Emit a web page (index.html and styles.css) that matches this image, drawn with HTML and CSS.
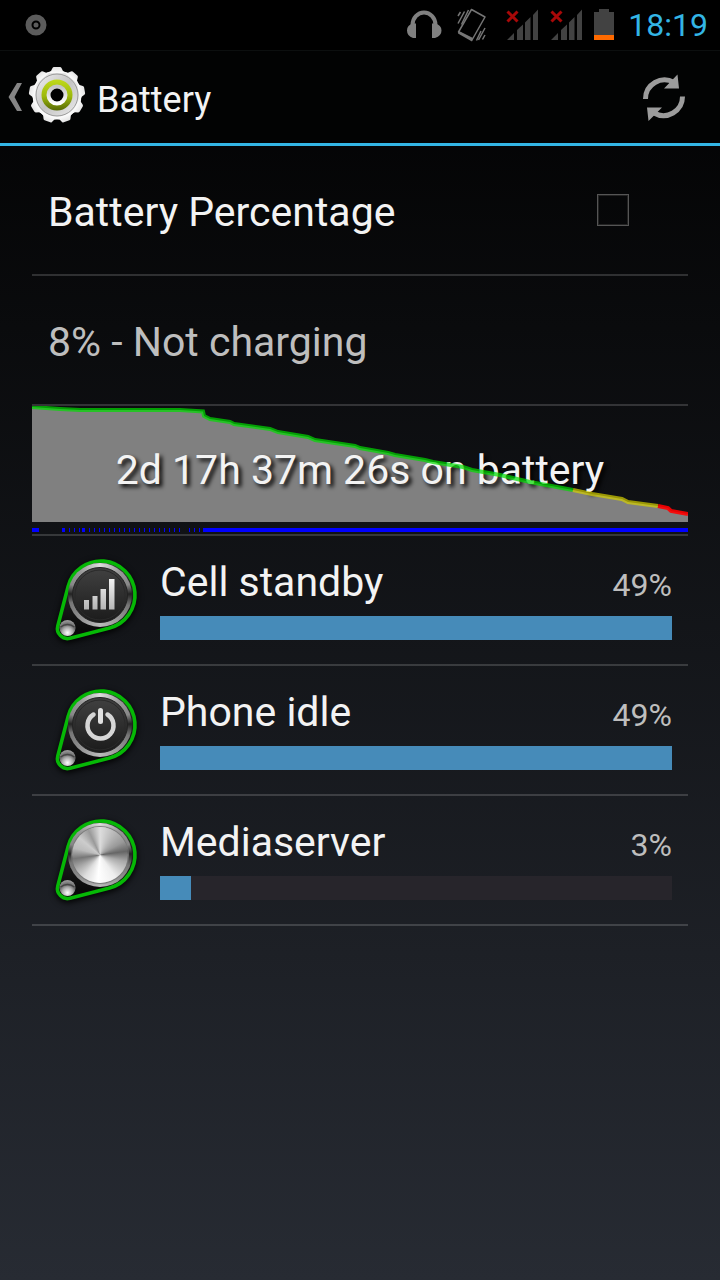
FILE: index.html
```
<!DOCTYPE html>
<html lang="en">
<head>
    <meta charset="UTF-8">
    <meta name="viewport" content="width=device-width, initial-scale=1.0">
    <title>Battery</title>
    <link rel="stylesheet" href="styles.css">
</head>
<body>
<!-- shared shapes -->
<svg class="defs" width="0" height="0" aria-hidden="true">
    <defs>
        <linearGradient id="hullFill" x1="0" y1="0" x2="0" y2="1">
            <stop offset="0" stop-color="#333"/>
            <stop offset="1" stop-color="#050505"/>
        </linearGradient>
        <linearGradient id="face" x1="0" y1="0" x2="0" y2="1">
            <stop offset="0" stop-color="#414141"/>
            <stop offset="1" stop-color="#1b1b1b"/>
        </linearGradient>
        <linearGradient id="silver" x1="0" y1="0" x2="0" y2="1">
            <stop offset="0" stop-color="#f2f2f2"/>
            <stop offset="1" stop-color="#b5b5b5"/>
        </linearGradient>
        <linearGradient id="gearFill" x1="0" y1="0" x2="0" y2="1">
            <stop offset="0" stop-color="#e4e4e4"/>
            <stop offset="1" stop-color="#fbfbfb"/>
        </linearGradient>
        <linearGradient id="plate" x1="0" y1="0" x2="1" y2="1">
            <stop offset="0" stop-color="#f0f0f0"/>
            <stop offset="0.5" stop-color="#c4c4c4"/>
            <stop offset="1" stop-color="#ededed"/>
        </linearGradient>
        <linearGradient id="lime" x1="0" y1="0" x2="0" y2="1">
            <stop offset="0" stop-color="#c0da1c"/>
            <stop offset="0.55" stop-color="#9cb80c"/>
            <stop offset="1" stop-color="#566806"/>
        </linearGradient>
        <linearGradient id="hub" x1="0" y1="0" x2="0" y2="1">
            <stop offset="0" stop-color="#c4c4c4"/>
            <stop offset="1" stop-color="#fff"/>
        </linearGradient>
        <radialGradient id="rivet" cx="0.5" cy="0.8" r="0.75">
            <stop offset="0" stop-color="#fff"/>
            <stop offset="0.45" stop-color="#aaa"/>
            <stop offset="0.7" stop-color="#666"/>
            <stop offset="1" stop-color="#999"/>
        </radialGradient>
        <path id="tooth" d="M-9 -22 L-6 -24 L-4.5 -27 Q-4 -28 -3 -28 H3 Q4 -28 4.5 -27 L6 -24 L9 -22 Z"/>
    </defs>
    <symbol id="hull" viewBox="0 0 96 96">
        <path d="M20.1 34.4 A34 34 0 1 1 61.6 75.9 L22 86.2 A10 10 0 0 1 9.8 74 Z" fill="url(#hullFill)" stroke="#06b806" stroke-width="3.6"/>
        <circle cx="19.5" cy="76" r="8" fill="url(#rivet)"/>
        <path d="M12.5 75 Q19.5 70 26.5 75" fill="none" stroke="#444" stroke-width="1.5"/>
    </symbol>
    <symbol id="signal" viewBox="0 0 32 34">
        <path d="M1 32 L8 25 V32 Z M11 22 L17 16.5 V32 H11 Z M19 14.5 L24.5 9 V32 H19 Z M27 7 L32 1.5 V32 H27 Z" fill="#424242"/>
        <path d="M1.5 3.5 L11.5 13.5 M11.5 3.5 L1.5 13.5" stroke="#a80808" stroke-width="3"/>
    </symbol>
</svg>

<div class="status-bar">
    <svg class="notice" viewBox="0 0 22 22">
        <circle cx="11" cy="11" r="7.5" fill="none" stroke="#5c5c5c" stroke-width="6"/>
        <circle cx="11" cy="11" r="2.5" fill="#5c5c5c"/>
    </svg>
    <div class="status-icons">
        <svg class="wide" viewBox="0 0 38 34">
            <path d="M6.5 20 V17 A11.5 12.5 0 0 1 29.500 17 V20" fill="none" stroke="#808080" stroke-width="4"/>
            <path d="M10 15.500 V30 H7 Q1 28 1 22.500 Q1 17 7 15.500 Z M26 15.500 V30 H29 Q35.500 28 35.500 22.500 Q35.500 17 29 15.500 Z" fill="#808080"/>
        </svg>
        <svg class="wide" viewBox="0 0 38 34">
            <path d="M15.5 1.5 L29 9 L16 32 L2.5 24 Z" fill="none" stroke="#757575" stroke-width="1.5" stroke-linejoin="round"/>
            <path d="M3 23 L17 30 L16 33.5 L2 25.5 Z" fill="#757575"/>
            <path d="M2 8 L4.5 4 M2 15.5 L8.5 3.5 M5.500 16.5 L12.5 2 M20.5 32.5 L25 23 M22.5 32 L29 20 M26.500 31.5 L29 27" fill="none" stroke="#757575" stroke-width="1.5"/>
        </svg>
        <svg class="signal"><use href="#signal"/></svg>
        <svg class="signal"><use href="#signal"/></svg>
        <svg class="cell" viewBox="0 0 22 34">
            <path d="M0 4 H5 V1 H15 V4 H20 V27 H0 Z" fill="#424242"/>
            <rect x="0" y="27" width="20" height="5" fill="#ff6a00"/>
        </svg>
        <time class="clock">18:19</time>
    </div>
</div>

<header class="action-bar">
    <a class="home" href="#">
        <svg class="back" viewBox="0 0 14 28">
            <path d="M9 0 H14 L6.5 14 L14 28 H9 L0.5 14 Z" fill="#858585"/>
        </svg>
        <svg class="gear" viewBox="-29 -29 58 58">
            <g fill="url(#gearFill)">
                <circle r="24.5"/>
                <use href="#tooth"/>
                <use href="#tooth" transform="rotate(40)"/>
                <use href="#tooth" transform="rotate(80)"/>
                <use href="#tooth" transform="rotate(120)"/>
                <use href="#tooth" transform="rotate(160)"/>
                <use href="#tooth" transform="rotate(200)"/>
                <use href="#tooth" transform="rotate(240)"/>
                <use href="#tooth" transform="rotate(280)"/>
                <use href="#tooth" transform="rotate(320)"/>
            </g>
            <circle r="21" fill="url(#plate)" stroke="#9a9a9a" stroke-width="1"/>
            <circle r="15.5" fill="url(#lime)"/>
            <circle r="8.5" fill="#000" stroke="url(#hub)" stroke-width="4"/>
        </svg>
        <h1>Battery</h1>
    </a>
    <button class="refresh" type="button" aria-label="Refresh">
        <svg viewBox="0 0 48 48">
            <path d="M5.5 26 A19 19 0 0 1 34 9.5 M42.5 23.5 A19 19 0 0 1 14 40" fill="none" stroke="#9c9c9c" stroke-width="5"/>
            <path d="M37.5 1.5 L39 15.5 L24 15.5 Z M8.5 48 L7 34.5 L22 34.5 Z" fill="#9c9c9c"/>
        </svg>
    </button>
</header>

<main>
    <ul class="list">
        <li class="setting">
            <label for="percentage">Battery Percentage</label>
            <input type="checkbox" id="percentage">
        </li>
        <li class="status"><span>8% - Not charging</span></li>
        <li class="history">
            <svg viewBox="0 0 656 128" preserveAspectRatio="none">
                <path d="M0 1 L28 3 L48 4 L148 4 L171 5.5 L172 10 L178 13 L198 16 L202 18 L238 23 L246 26 L276 31 L283 34 L323 40 L328 42 L356 47 L363 49 L393 54 L401 56 L431 61 L440 64 L468 69 L498 76 L541 84 L560 88 L590 93 L596 96 L626 100 L636 102 L639 105 L656 108 V116 H0 Z" fill="#808080"/>
                <g stroke="#00f" stroke-width="4" shape-rendering="crispEdges">
                    <path d="M0 124 H7 M30 124 H33 M50 124 H53 M171 124 H656"/>
                    <path d="M37 124 H148" stroke-dasharray="1 4"/>
                    <path d="M157 124 H170" stroke-dasharray="1 4"/>
                </g>
            </svg>
            <span>2d 17h 37m 26s on battery</span>
            <svg viewBox="0 0 656 128" preserveAspectRatio="none">
                <g fill="none" stroke-width="4" stroke-opacity="0.7">
                    <path d="M0 1 L28 3 L48 4 L148 4 L171 5.5 L172 10 L178 13 L198 16 L202 18 L238 23 L246 26 L276 31 L283 34 L323 40 L328 42 L356 47 L363 49 L393 54 L401 56 L431 61 L440 64 L468 69 L498 76 L541 84" stroke="#0d0"/>
                    <path d="M541 84 L560 88 L590 93 L596 96 L626 100" stroke="#d6d000"/>
                    <path d="M626 100 L636 102 L639 105 L656 108" stroke="#f00" stroke-opacity="0.9"/>
                </g>
            </svg>
        </li>
        <li class="usage">
            <a href="#">
                <span class="app-icon">
                    <svg><use href="#hull"/></svg>
                    <i class="metal"></i>
                    <svg viewBox="0 0 96 96">
                        <circle cx="52" cy="43" r="27.5" fill="url(#face)" stroke="#222" stroke-width="1"/>
                        <circle cx="52" cy="43" r="25" fill="none" stroke="#2a2a2a" stroke-width="1"/>
                        <path d="M36 48 H41 V57.5 H36 Z M44.5 44 H49.5 V57.5 H44.5 Z M52.5 37 H58 V57.5 H52.5 Z M61 27 H66.5 V57.5 H61 Z" fill="url(#silver)"/>
                    </svg>
                </span>
                <span class="detail">
                    <span class="name">Cell standby</span>
                    <span class="percent">49%</span>
                    <span class="bar"><span class="fill" style="width: 100%"></span></span>
                </span>
            </a>
        </li>
        <li class="usage">
            <a href="#">
                <span class="app-icon">
                    <svg><use href="#hull"/></svg>
                    <i class="metal"></i>
                    <svg viewBox="0 0 96 96">
                        <circle cx="52" cy="43" r="27.5" fill="url(#face)" stroke="#222" stroke-width="1"/>
                        <circle cx="52" cy="43" r="25" fill="none" stroke="#2a2a2a" stroke-width="1"/>
                        <path d="M45.5 32.5 A13 13 0 1 0 59.5 32.5" fill="none" stroke="#d6d6d6" stroke-width="4.5" stroke-linecap="round"/>
                        <path d="M52.5 28.5 V39.5" stroke="#e0e0e0" stroke-width="5" stroke-linecap="round"/>
                    </svg>
                </span>
                <span class="detail">
                    <span class="name">Phone idle</span>
                    <span class="percent">49%</span>
                    <span class="bar"><span class="fill" style="width: 100%"></span></span>
                </span>
            </a>
        </li>
        <li class="usage">
            <a href="#">
                <span class="app-icon">
                    <svg><use href="#hull"/></svg>
                    <i class="metal"></i>
                    <i class="metal disc"></i>
                </span>
                <span class="detail">
                    <span class="name">Mediaserver</span>
                    <span class="percent">3%</span>
                    <span class="bar"><span class="fill" style="width: 6%"></span></span>
                </span>
            </a>
        </li>
    </ul>
</main>
</body>
</html>
```
FILE: styles.css
```
*{
    margin: 0;
    padding: 0;
    box-sizing: border-box;
}
html{
    min-height: 100%;
    background: linear-gradient(#000, #272b33);
}
body{
    font-family: Roboto, "Noto Sans", sans-serif;
    color: #f3f3f3;
}
a{
    color: inherit;
    text-decoration: none;
}
svg{
    display: block;
}
.defs{
    position: absolute;
}

/* status bar */
.status-bar{
    height: 50px;
    padding: 0 12px 0 25px;
    background: #000;
    display: flex;
    justify-content: space-between;
    align-items: center;
}
.notice{
    width: 22px;
    height: 22px;
}
.status-icons{
    display: flex;
    align-items: center;
    gap: 12px;
}
.wide{
    width: 38px;
    height: 34px;
}
.signal{
    width: 32px;
    height: 34px;
}
.cell{
    width: 22px;
    height: 34px;
}
.clock{
    color: #33b5e5;
    font-size: 32px;
    line-height: 50px;
}

/* action bar */
.action-bar{
    height: 96px;
    padding: 0 32px 0 8px;
    background: #020303;
    border-top: 1px solid #0c0f0f;
    border-bottom: 3px solid #33b5e5;
    display: flex;
    justify-content: space-between;
    align-items: center;
}
.home{
    display: flex;
    align-items: center;
}
.back{
    width: 14px;
    height: 28px;
}
.gear{
    width: 58px;
    height: 58px;
    margin: 0 11px 4px 6px;
}
.home h1{
    padding-top: 6px;
    font-size: 36px;
    font-weight: normal;
    line-height: 48px;
}
.refresh{
    width: 48px;
    height: 48px;
    background: none;
    border: none;
}

/* list */
.list{
    list-style: none;
    padding: 0 32px;
    font-size: 41px;
}
.list>li{
    height: 130px;
    border-bottom: 2px solid rgba(255, 255, 255, 0.16);
}
.setting,
.status{
    padding: 0 16px;
    display: flex;
    align-items: center;
    justify-content: space-between;
}
.setting label,
.status span{
    padding-top: 4px;
}
.setting input{
    appearance: none;
    width: 32px;
    height: 32px;
    margin-right: 43px;
    border: 1px solid #555;
    box-shadow: inset 0 0 0 1px #222;
}
.status{
    color: #bebebe;
}

/* chart, text and line share one grid cell */
.history{
    display: grid;
}
.history>*{
    grid-area: 1 / 1;
    width: 100%;
    height: 128px;
}
.history>span{
    line-height: 128px;
    text-align: center;
    text-shadow: 3px 3px 4px #000;
}

.usage a{
    height: 128px;
    padding: 0 16px;
    display: flex;
    align-items: center;
    gap: 16px;
}
.app-icon{
    width: 96px;
    height: 96px;
    display: grid;
    filter: drop-shadow(0 2px 3px #000);
}
.app-icon>*{
    grid-area: 1 / 1;
    width: 96px;
    height: 96px;
}
.app-icon>.metal{
    width: 64px;
    height: 64px;
    margin: 11px 20px;
    border-radius: 50%;
    background: conic-gradient(#ddd, #999 40deg, #888 70deg, #222 88deg, #777 110deg, #bbb 180deg, #888 230deg, #777 255deg, #222 272deg, #888 290deg, #999 320deg, #ddd);
}
.app-icon>.disc{
    width: 56px;
    height: 56px;
    margin: 15px 24px;
    background: conic-gradient(#ddd, #bbb 30deg, #999 60deg, #666 82deg, #aaa 105deg, #eee 145deg, #fff 185deg, #ddd 215deg, #aaa 240deg, #777 262deg, #bbb 285deg, #ccc 310deg, #999 335deg, #ddd);
    box-shadow: 0 0 1px 1px #777;
}
.detail{
    flex: 1;
    display: grid;
    grid-template-columns: 1fr auto;
    align-items: baseline;
    row-gap: 12px;
}
.name{
    line-height: 44px;
}
.percent{
    color: #bebebe;
    font-size: 32px;
}
.bar{
    grid-column: 1 / 3;
    height: 24px;
    background: #27252b;
}
.fill{
    display: block;
    height: 24px;
    background: #468bb9;
}
```
